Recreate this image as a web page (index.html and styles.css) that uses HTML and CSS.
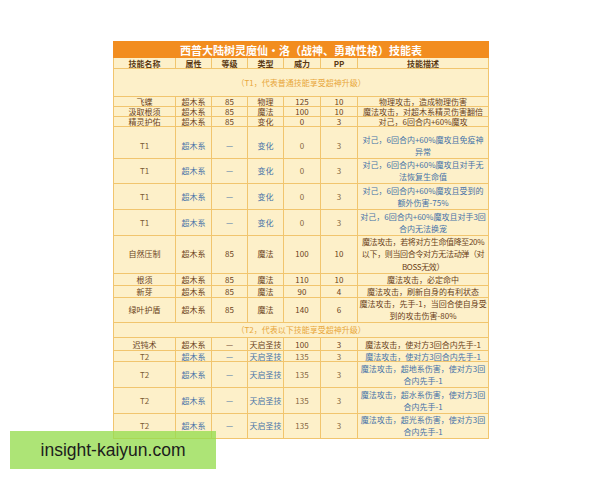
FILE: index.html
```html
<!DOCTYPE html>
<html lang="zh-CN">
<head>
<meta charset="utf-8">
<title>技能表</title>
<link rel="stylesheet" href="styles.css">
</head>
<body>
<table class="skills">
  <colgroup>
    <col class="c-name"><col class="c-attr"><col class="c-lv"><col class="c-type"><col class="c-pow"><col class="c-pp"><col class="c-desc">
  </colgroup>
  <tr class="title-row"><th colspan="7">西普大陆树灵魔仙•洛（战神、勇敢性格）技能表</th></tr>
  <tr class="head-row">
    <th>技能名称</th><th>属性</th><th>等级</th><th>类型</th><th>威力</th><th>PP</th><th>技能描述</th>
  </tr>
  <tr class="h28 note"><td colspan="7">（T1，代表普通技能享受超神升级）</td></tr>
  <tr class="h10"><td>飞蝶</td><td>超木系</td><td>85</td><td>物理</td><td>125</td><td>10</td><td class="desc">物理攻击，造成物理伤害</td></tr>
  <tr class="h10"><td>汲取根须</td><td>超木系</td><td>85</td><td>魔法</td><td>100</td><td>10</td><td class="desc">魔法攻击，对超木系精灵伤害翻倍</td></tr>
  <tr class="h10"><td>精灵护佑</td><td>超木系</td><td>85</td><td>变化</td><td>0</td><td>3</td><td class="desc">对己，6回合内+60%魔攻</td></tr>
  <tr class="h32 tier"><td class="lbl">T1</td><td>超木系</td><td>—</td><td>变化</td><td class="num">0</td><td class="num">3</td><td class="desc">对己，6回合内+60%魔攻且免疫神<br>异常</td></tr>
  <tr class="h25 tier"><td class="lbl">T1</td><td>超木系</td><td>—</td><td>变化</td><td class="num">0</td><td class="num">3</td><td class="desc">对己，6回合内+60%魔攻且对手无<br>法恢复生命值</td></tr>
  <tr class="h26 tier"><td class="lbl">T1</td><td>超木系</td><td>—</td><td>变化</td><td class="num">0</td><td class="num">3</td><td class="desc">对己，6回合内+60%魔攻且受到的<br>额外伤害-75%</td></tr>
  <tr class="h26 tier"><td class="lbl">T1</td><td>超木系</td><td>—</td><td>变化</td><td class="num">0</td><td class="num">3</td><td class="desc">对己，6回合内+60%魔攻且对手3回<br>合内无法换宠</td></tr>
  <tr class="h38"><td>自然压制</td><td>超木系</td><td>85</td><td>魔法</td><td>100</td><td>10</td><td class="desc tight">魔法攻击，若将对方生命值降至20%<br>以下，则当回合令对方无法动弹（对<br>BOSS无效）</td></tr>
  <tr class="h12"><td>根须</td><td>超木系</td><td>85</td><td>魔法</td><td>110</td><td>10</td><td class="desc">魔法攻击，必定命中</td></tr>
  <tr class="h12"><td>新芽</td><td>超木系</td><td>85</td><td>魔法</td><td>90</td><td>4</td><td class="desc">魔法攻击，刷新自身的有利状态</td></tr>
  <tr class="h25"><td>绿叶护盾</td><td>超木系</td><td>85</td><td>魔法</td><td>140</td><td>6</td><td class="desc">魔法攻击，先手-1，当回合使自身受<br>到的攻击伤害-80%</td></tr>
  <tr class="h15 note"><td colspan="7">（T2，代表以下技能享受超神升级）</td></tr>
  <tr class="h13"><td>迟钝术</td><td>超木系</td><td>—</td><td>天启圣技</td><td>100</td><td>3</td><td class="desc">魔法攻击，使对方3回合内先手-1</td></tr>
  <tr class="h11 tier"><td class="lbl">T2</td><td>超木系</td><td>—</td><td>天启圣技</td><td class="num">135</td><td class="num">3</td><td class="desc">魔法攻击，使对方3回合内先手-1</td></tr>
  <tr class="h26 tier"><td class="lbl">T2</td><td>超木系</td><td>—</td><td>天启圣技</td><td class="num">135</td><td class="num">3</td><td class="desc">魔法攻击，超地系伤害，使对方3回<br>合内先手-1</td></tr>
  <tr class="h26 tier"><td class="lbl">T2</td><td>超木系</td><td>—</td><td>天启圣技</td><td class="num">135</td><td class="num">3</td><td class="desc">魔法攻击，超水系伤害，使对方3回<br>合内先手-1</td></tr>
  <tr class="h25 tier"><td class="lbl">T2</td><td>超木系</td><td>—</td><td>天启圣技</td><td class="num">135</td><td class="num">3</td><td class="desc">魔法攻击，超光系伤害，使对方3回<br>合内先手-1</td></tr>
</table>
<div class="watermark">insight-kaiyun.com</div>
</body>
</html>
```
FILE: styles.css
```css
html, body {
  margin: 0;
  padding: 0;
  background: #ffffff;
}
body {
  width: 600px;
  height: 480px;
  position: relative;
  overflow: hidden;
  font-family: "Noto Sans CJK SC", "Noto Sans", sans-serif;
}
.skills {
  margin: 41px 0 0 113px;
  width: 375px;
  table-layout: fixed;
  border-collapse: collapse;
  background: #fdf0c9;
  font-size: 8px;
  color: #6b4219;
}
.c-name { width: 62px; }
.c-attr { width: 36px; }
.c-lv { width: 36px; }
.c-type { width: 36px; }
.c-pow { width: 37px; }
.c-pp { width: 37px; }
.c-desc { width: 131px; }
.skills td, .skills th {
  border: 1px solid #f1c56e;
  padding: 0;
  text-align: center;
  vertical-align: middle;
  line-height: 12px;
  white-space: nowrap;
  overflow: visible;
}
.title-row { height: 16px; }
.title-row th {
  background: #f28d1f;
  border-color: #f28d1f;
  color: #ffffff;
  font-size: 11px;
  font-weight: 700;
  line-height: 14px;
}
.head-row { height: 11px; }
.head-row th {
  font-weight: 700;
  color: #5a3812;
  line-height: 9px;
}
.note td { color: #e8a73c; }
.h10 { height: 10px; }
.h10 td { line-height: 8px; }
.h11 { height: 11px; }
.h11 td { line-height: 9px; }
.h12 { height: 12px; }
.h12 td { line-height: 10px; }
.h13 { height: 13px; }
.h13 td { line-height: 11px; }
.h15 { height: 15px; }
.h15 td { line-height: 12px; }
.h25 { height: 25px; }
.h26 { height: 26px; }
.h28 { height: 28px; }
.h32 { height: 32px; }
.h32 td { padding-top: 6px; }
.h38 { height: 38px; }
.h38 td { line-height: 12.3px; }
.tier td { color: #4673a8; }
.tier td.lbl { color: #7a5a34; }
.tier td.num { color: #86673f; }
.tight { letter-spacing: -0.35px; }
.watermark {
  position: absolute;
  left: 10px;
  top: 431px;
  width: 206px;
  height: 38px;
  background: rgba(150, 220, 80, 0.78);
  color: #1c1c1c;
  font-family: "Liberation Sans", Arial, sans-serif;
  font-size: 17.5px;
  line-height: 38px;
  text-align: center;
}
```
